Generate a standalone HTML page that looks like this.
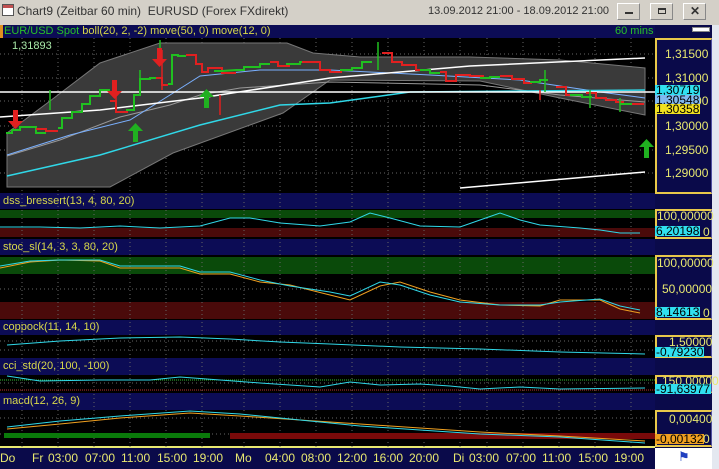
<!DOCTYPE html>
<html><head><meta charset="utf-8"><style>
*{margin:0;padding:0;box-sizing:border-box}
body{width:719px;height:469px;overflow:hidden;background:#0a0a4a;font-family:"Liberation Sans",sans-serif;position:relative}
.a{position:absolute}
.t{font-size:12px;white-space:nowrap;line-height:13px}
.hdr{position:absolute;left:0;width:655px;background:#0c0c55;color:#d8d84a;font-size:11px;line-height:13px;padding-left:3px;white-space:nowrap}
.ax{position:absolute;left:655px;width:57px;background:#0a0a4a;border:2px solid #e8c84a;border-right:1px solid #5050a0}
.lbl{position:absolute;color:#e8e870;font-size:12px;line-height:12px;white-space:nowrap}
.bd{position:absolute;left:655px;font-size:12px;color:#000;padding:0 1px;line-height:10px;height:10px;white-space:nowrap;overflow:hidden}
.btn{position:absolute;top:3px;width:23px;height:17px;background:#d4d0c8;border:1px solid #888;border-top-color:#fff;border-left-color:#fff}
</style></head><body>
<div class="a" style="left:0;top:0;width:719px;height:25px;background:#d4d0c8"></div>
<div class="a" style="left:2px;top:4px;width:12px;height:12px;background:#fff;border:1px solid #555"><div style="height:3px;background:#c05050"></div></div>
<div class="a t" style="left:17px;top:5px;color:#333;font-size:12px">Chart9 (Zeitbar 60 min)&nbsp; EURUSD (Forex FXdirekt)</div>
<div class="a t" style="left:428px;top:5px;color:#333;font-size:11px">13.09.2012 21:00 - 18.09.2012 21:00</div>
<div class="btn" style="left:617px"><div class="a" style="left:7px;top:8px;width:8px;height:2px;background:#333"></div></div>
<div class="btn" style="left:650px"><div class="a" style="left:7px;top:4px;width:8px;height:6px;border:1px solid #333;border-top-width:2px"></div></div>
<div class="btn" style="left:683px"><div class="a t" style="left:6px;top:1px;font-size:12px;color:#333;font-weight:bold">✕</div></div>
<div class="a" style="left:712px;top:25px;width:7px;height:444px;background:#e4e8f0"></div>

<div class="hdr" style="top:25px;height:13px;border-left:3px solid #e09020;padding-left:1px"><span style="color:#28c028">EUR/USD Spot</span> boll(20, 2, -2) move(50, 0) move(12, 0)<span style="position:absolute;left:612px;color:#28c028">60 mins</span></div>
<div class="a" style="left:692px;top:27px;width:18px;height:5px;background:#fff;border:1px solid #888"></div>
<div class="hdr" style="top:194px;height:15px;line-height:15px">dss_bressert(13, 4, 80, 20)</div>
<div class="hdr" style="top:239px;height:16px;line-height:16px">stoc_sl(14, 3, 3, 80, 20)</div>
<div class="hdr" style="top:320px;height:15px;line-height:15px">coppock(11, 14, 10)</div>
<div class="hdr" style="top:358px;height:17px;line-height:17px">cci_std(20, 100, -100)</div>
<div class="hdr" style="top:393px;height:17px;line-height:17px">macd(12, 26, 9)</div>

<svg class="a" style="left:0;top:0" width="655" height="469">
<rect x="0" y="38" width="655" height="156" fill="#000"/>
<rect x="0" y="209" width="655" height="30" fill="#000"/>
<rect x="0" y="255" width="655" height="65" fill="#000"/>
<rect x="0" y="335" width="655" height="23" fill="#000"/>
<rect x="0" y="375" width="655" height="18" fill="#000"/>
<rect x="0" y="410" width="655" height="37" fill="#000"/>
<rect x="0" y="446" width="655" height="2" fill="#e8e870"/>
<rect x="0" y="210" width="655" height="8" fill="#0a4a0a"/>
<rect x="0" y="228" width="655" height="9" fill="#4a0a0a"/>
<rect x="0" y="257" width="655" height="17" fill="#0a4a0a"/>
<rect x="0" y="302" width="655" height="17" fill="#4a0a0a"/>
<g stroke="#666" stroke-dasharray="1 3" stroke-width="1">
<path d="M22 38V447M58 38V447M94 38V447M130 38V447M166 38V447M202 38V447M244 38V447M280 38V447M316 38V447M352 38V447M388 38V447M424 38V447M460 38V447M487 38V447M523 38V447M559 38V447M595 38V447M631 38V447"/>
<path d="M0 54H655M0 78H655M0 101H655M0 126H655M0 150H655M0 173H655M0 289H655M0 341H655M0 350H655M0 383H655M0 418H655M0 434H655"/>
</g>
<rect x="0" y="193" width="655" height="1" fill="#0c0c55"/>
<polygon points="7,133 50,101 100,63 160,43 287,43 313,53 360,57 470,57 560,60 645,68 645,115 560,98 480,81 330,80 283,113 173,153 110,187 7,187" fill="#3a3a3a" stroke="#777"/>
<polyline points="7,156 60,140 120,117 170,105 200,95 240,88 330,82 480,85 560,95 645,102" fill="none" stroke="#999"/>
<polyline points="7,155 70,135 130,120 170,95 200,76 260,70 330,70 430,75 520,80 600,92 645,98" fill="none" stroke="#7ab0ff"/>
<polyline points="7,176 100,155 200,125 280,105 330,103 410,92 645,90" fill="none" stroke="#30d8e8" stroke-width="1.5"/>
<line x1="0" y1="92" x2="655" y2="92" stroke="#fff" stroke-width="1.5"/>
<polyline points="0,117 100,110 200,98 330,78 470,66 645,58" fill="none" stroke="#fff" stroke-width="1.5"/>
<polyline points="460,188 645,172" fill="none" stroke="#fff" stroke-width="1.5"/>
<g fill="none" stroke-width="2">
<polyline stroke="#20c020" points="6,133 12,133 12,130 20,130 20,127 36,127 36,133 46,133"/>
<polyline stroke="#e02020" points="36,129 46,129 46,131 58,131"/>
<polyline stroke="#20c020" points="58,128 62,128 62,118 72,118 72,112 82,112 82,104 90,104 90,96 100,96 100,90 110,90"/>
<polyline stroke="#e02020" points="110,101 116,101 116,112 128,112"/>
<polyline stroke="#20c020" points="126,110 134,110 134,95 140,95 140,79 150,79 150,78 156,78"/>
<polyline stroke="#e02020" points="156,78 162,78 162,85 168,85"/>
<polyline stroke="#20c020" points="168,84 172,84 172,55 178,55 178,56 186,56"/>
<polyline stroke="#e02020" points="186,55 196,55 196,64 202,64 202,72 208,72 208,68 222,68 222,73 236,73"/>
<polyline stroke="#20c020" points="214,71 222,71 236,70 244,70 244,67 260,67 260,64 270,64"/>
<polyline stroke="#e02020" points="270,62 278,62 278,66 290,66"/>
<polyline stroke="#20c020" points="286,64 300,64 300,62 310,62"/>
<polyline stroke="#e02020" points="302,62 320,62 320,70 330,70 330,72 342,72"/>
<polyline stroke="#20c020" points="340,70 352,70 352,68 362,68 362,62 372,62"/>
<polyline stroke="#e02020" points="382,53 392,53 392,62 402,62 402,65 416,65 416,70 426,70"/>
<polyline stroke="#20c020" points="420,70 430,70 430,73 440,73"/>
<polyline stroke="#e02020" points="440,72 446,72 446,81 456,81 456,75 470,75 470,76 484,76"/>
<polyline stroke="#20c020" points="480,78 490,78 490,77 500,77"/>
<polyline stroke="#e02020" points="500,76 512,76 512,79 524,79 524,83 532,83"/>
<polyline stroke="#20c020" points="530,82 540,82 540,80 548,80"/>
<polyline stroke="#e02020" points="556,87 566,87 566,95 580,95"/>
<polyline stroke="#20c020" points="570,95 582,95 582,97 592,97"/>
<polyline stroke="#e02020" points="586,93 596,93 596,98 606,98 606,100 616,100 616,102 624,102"/>
<polyline stroke="#20c020" points="620,104 634,104"/>
<polyline stroke="#e02020" points="632,104 644,104"/>
</g>
<g stroke-width="1.5"><path d="M50 90V110M140 70V92M160 40V60M378 42V70M545 70V92M590 90V108M620 98V112" stroke="#20c020"/><path d="M116 85V112M162 50V90M220 95V115M540 90V100" stroke="#e02020"/></g>
<g fill="#e02020"><path d="M13 110h5v11h5l-7.5 8-7.5-8h5z"/><path d="M112 80h5v11h5l-7.5 8-7.5-8h5z"/><path d="M157 48h5v11h5l-7.5 8-7.5-8h5z"/></g>
<g fill="#20b020"><path d="M133 142h5v-11h5l-7.5-8-7.5 8h5z"/><path d="M204 108h5v-11h5l-7.5-8-7.5 8h5z"/><path d="M644 158h5v-11h5l-7.5-8-7.5 8h5z"/></g>
<polyline points="0,227 40,227 80,228 120,226 160,228 200,226 230,218 250,218 280,223 320,226 350,222 370,213 390,218 420,226 460,227 480,220 500,213 520,220 540,225 580,228 600,230 620,233 640,233" fill="none" stroke="#30d8e8"/>
<polyline points="0,268 30,262 60,260 100,261 120,268 180,268 200,274 230,274 260,282 290,285 330,295 350,300 380,286 400,282 430,292 460,300 500,305 540,306 560,300 600,300 620,309 640,313" fill="none" stroke="#f0a020"/>
<polyline points="0,266 30,261 60,260 100,260 120,266 180,266 200,272 230,272 260,280 290,286 330,292 350,296 380,282 400,285 430,295 460,302 500,305 540,305 560,302 600,299 620,306 640,310" fill="none" stroke="#30d8e8"/>
<polyline points="7,345 60,341 120,338 180,337 230,339 280,342 330,344 400,347 480,349 560,352 645,354" fill="none" stroke="#30d8e8"/>
<line x1="0" y1="380" x2="655" y2="380" stroke="#30c030" stroke-dasharray="1 1"/>
<line x1="0" y1="390" x2="655" y2="390" stroke="#c03030" stroke-dasharray="1 1"/>
<polyline points="7,376 40,381 100,380 150,380 180,377 220,380 260,383 320,387 350,382 380,385 420,384 450,386 480,389 520,387 560,389 645,388" fill="none" stroke="#30d8e8"/>
<rect x="4" y="433" width="206" height="5" fill="#0a7a0a"/>
<rect x="230" y="433" width="425" height="6" fill="#7a0a0a"/>
<polyline points="7,429 60,424 120,418 190,413 240,416 300,420 360,424 420,428 480,432 560,436 645,441" fill="none" stroke="#f0a020"/>
<polyline points="7,427 60,421 120,416 190,411 240,414 300,420 360,426 420,430 480,434 560,437 645,443" fill="none" stroke="#30d8e8"/>
</svg>

<div class="ax" style="top:38px;height:156px"></div>
<div class="ax" style="top:209px;height:30px"></div>
<div class="ax" style="top:255px;height:65px"></div>
<div class="ax" style="top:335px;height:23px"></div>
<div class="ax" style="top:375px;height:18px"></div>
<div class="ax" style="top:410px;height:37px"></div>
<div class="a" style="left:655px;top:448px;width:57px;height:21px;background:#fff"></div>
<div class="a t" style="left:678px;top:450px;color:#2040c0;font-size:13px">⚑</div>
<div class="a" style="left:0;top:448px;width:655px;height:21px;background:#0a0a4a"></div>

<div class="lbl" style="top:48px;left:665px">1,31500</div>
<div class="lbl" style="top:72px;left:665px">1,31000</div>
<div class="lbl" style="top:95px;left:665px">1,30500</div>
<div class="lbl" style="top:120px;left:665px">1,30000</div>
<div class="lbl" style="top:144px;left:665px">1,29500</div>
<div class="lbl" style="top:167px;left:665px">1,29000</div>
<div class="bd" style="top:85px;background:#30e0f0">1,30719</div>
<div class="bd" style="top:95px;background:#80b8f0">1,30548</div>
<div class="bd" style="top:104px;background:#f0e020">1,30358</div>
<div class="a t" style="left:12px;top:40px;color:#a8e8a8;font-size:11px">1,31893</div>

<div class="lbl" style="top:210px;left:657px">100,00000</div>
<div class="bd" style="top:226px;background:#30e0f0">6,20198</div>
<div class="lbl" style="top:226px;left:703px">0</div>
<div class="lbl" style="top:257px;left:657px">100,00000</div>
<div class="lbl" style="top:283px;left:662px">50,00000</div>
<div class="bd" style="top:307px;background:#30e0f0">8,14613</div>
<div class="lbl" style="top:307px;left:703px">0</div>
<div class="lbl" style="top:336px;left:669px">1,50000</div>
<div class="bd" style="top:347px;background:#30e0f0">-0,79230</div>
<div class="lbl" style="top:375px;left:662px">150,00000</div>
<div class="bd" style="top:384px;background:#30e0f0">-91,63977</div>
<div class="lbl" style="top:413px;left:669px">0,00400</div>
<div class="bd" style="top:434px;background:#f0a020">-0,00132</div>
<div class="lbl" style="top:433px;left:703px">0</div>

<div class="a t" style="top:452px;left:0;color:#e8e870;font-size:12px">
<span class="a" style="left:0">Do</span><span class="a" style="left:32px">Fr</span><span class="a" style="left:48px">03:00</span><span class="a" style="left:85px">07:00</span><span class="a" style="left:121px">11:00</span><span class="a" style="left:157px">15:00</span><span class="a" style="left:193px">19:00</span><span class="a" style="left:235px">Mo</span><span class="a" style="left:265px">04:00</span><span class="a" style="left:301px">08:00</span><span class="a" style="left:337px">12:00</span><span class="a" style="left:373px">16:00</span><span class="a" style="left:409px">20:00</span><span class="a" style="left:453px">Di</span><span class="a" style="left:469px">03:00</span><span class="a" style="left:506px">07:00</span><span class="a" style="left:542px">11:00</span><span class="a" style="left:578px">15:00</span><span class="a" style="left:614px">19:00</span>
</div>
</body></html>
